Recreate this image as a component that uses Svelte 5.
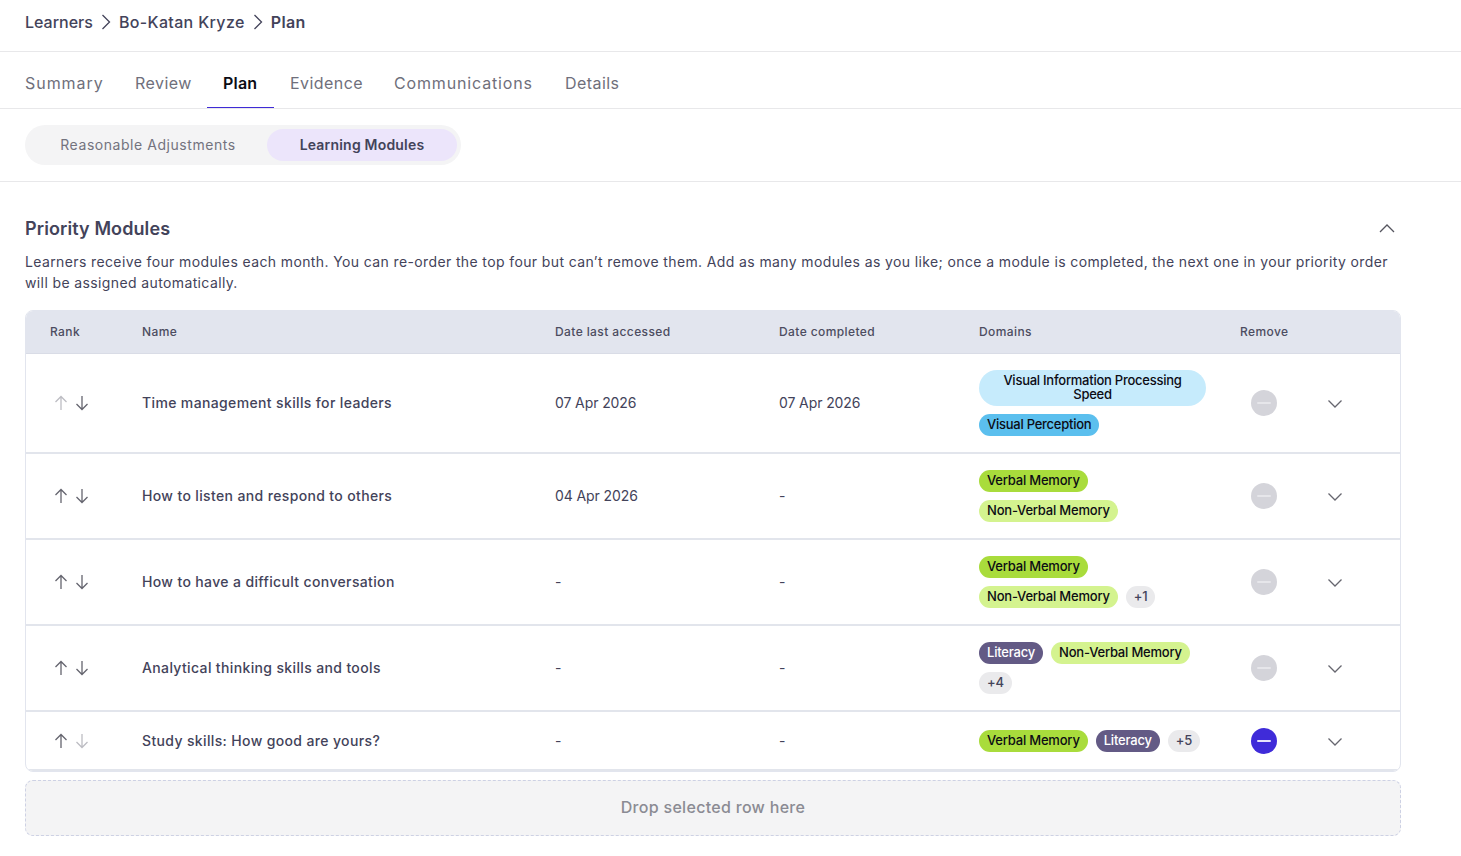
<script>
	const C = {
		verbal: 'Verbal Memory',
		nonverbal: 'Non-Verbal Memory'
	};

	const rows = [
		{
			name: 'Time management skills for leaders',
			accessed: '07 Apr 2026',
			completed: '07 Apr 2026',
			tags: [
				{ label: 'Visual Information Processing Speed', kind: 'sky' },
				{ label: 'Visual Perception', kind: 'blue' }
			],
			upOff: true
		},
		{
			name: 'How to listen and respond to others',
			accessed: '04 Apr 2026',
			completed: '-',
			tags: [
				{ label: C.verbal, kind: 'green' },
				{ label: C.nonverbal, kind: 'lime' }
			]
		},
		{
			name: 'How to have a difficult conversation',
			accessed: '-',
			completed: '-',
			tags: [
				{ label: C.verbal, kind: 'green' },
				{ label: C.nonverbal, kind: 'lime' },
				{ label: '+1', kind: 'more' }
			]
		},
		{
			name: 'Analytical thinking skills and tools',
			accessed: '-',
			completed: '-',
			tags: [
				{ label: 'Literacy', kind: 'purple' },
				{ label: C.nonverbal, kind: 'lime' },
				{ label: '+4', kind: 'more' }
			]
		},
		{
			name: 'Study skills: How good are yours?',
			accessed: '-',
			completed: '-',
			tags: [
				{ label: C.verbal, kind: 'green' },
				{ label: 'Literacy', kind: 'purple' },
				{ label: '+5', kind: 'more' }
			],
			downOff: true,
			removable: true
		}
	];

	const tabs = ['Summary', 'Review', 'Plan', 'Evidence', 'Communications', 'Details'];
</script>

<header class="crumbs">
	<span class="first">Learners</span>
	<svg width="16" height="16" viewBox="0 0 16 16"><path d="M4.500 1l7 7-7 7" /></svg>
	<span>Bo-Katan Kryze</span>
	<svg width="16" height="16" viewBox="0 0 16 16"><path d="M4.500 1l7 7-7 7" /></svg>
	<strong>Plan</strong>
</header>

<nav class="tabs">
	{#each tabs as tab}
		<button class="tab" class:active={tab === 'Plan'}>{tab}</button>
	{/each}
</nav>

<div class="toggle-bar">
	<div class="toggle">
		<button class="seg">Reasonable Adjustments</button>
		<button class="seg on">Learning Modules</button>
	</div>
</div>

<main>
	<div class="title-row">
		<h2>Priority Modules</h2>
		<svg class="collapse" width="18" height="18" viewBox="0 0 18 18"><path d="M2 13l7-7 7 7" /></svg>
	</div>
	<p class="intro">
		Learners receive four modules each month. You can re-order the top four but can’t remove them. Add as many modules as you like; once a module is completed, the next one in your priority order will be assigned automatically.
	</p>

	<div class="table">
		<div class="row head">
			<div>Rank</div>
			<div>Name</div>
			<div>Date last accessed</div>
			<div>Date completed</div>
			<div>Domains</div>
			<div>Remove</div>
		</div>
		{#each rows as row}
			<div class="row">
				<div class="arrows">
					<svg class:off={row.upOff} width="14" height="16" viewBox="0 0 14 16"><path d="M7 15V1.500M1.500 7L7 1.500 12.500 7" /></svg>
					<svg class:off={row.downOff} width="14" height="16" viewBox="0 0 14 16"><path d="M7 1v13.500M1.500 9L7 14.500 12.500 9" /></svg>
				</div>
				<div class="name">{row.name}</div>
				<div class="date">{row.accessed}</div>
				<div class="date">{row.completed}</div>
				<div class="tags">
					{#each row.tags as tag}
						<span class="tag {tag.kind}">{tag.label}</span>
					{/each}
				</div>
				<div class="actions">
					<button class="remove" class:live={row.removable} aria-label="Remove"><i></i></button>
					<svg class="chev" width="16" height="16" viewBox="0 0 16 16"><path d="M1.500 4.500L8 11l6.500-6.500" /></svg>
				</div>
			</div>
		{/each}
	</div>

	<div class="drop">Drop selected row here</div>
</main>

<style>
	:global(body) {
		margin: 0;
		font-family: Inter, 'Noto Sans', sans-serif;
		color: #43435a;
		background: #fff;
	}

	svg path {
		fill: none;
		stroke: currentColor;
		stroke-width: 1.3;
	}

	button {
		font-family: inherit;
		border: none;
		background: none;
		padding: 0;
	}

	.crumbs {
		height: 52px;
		padding: 0 25px 8px;
		box-sizing: border-box;
		border-bottom: 1px solid #e8e8ea;
		display: flex;
		align-items: center;
		gap: 5px;
		font-size: 16px;
		font-weight: 500;
		letter-spacing: 0.35px;
	}

	.crumbs .first {
		letter-spacing: 0;
	}

	.crumbs strong {
		font-weight: 600;
		letter-spacing: 0.4px;
	}

	.tabs {
		height: 57px;
		box-sizing: border-box;
		border-bottom: 1px solid #e8e8ea;
		display: grid;
		grid-template-columns: 110px 88px 67px 104px 171px 86px;
		padding-left: 9px;
	}

	.tab {
		padding: 5px 0 0 16px;
		height: 56px;
		box-sizing: border-box;
		text-align: left;
		font-size: 16px;
		letter-spacing: 0.45px;
		color: #6f6f7b;
	}

	.tab:first-child {
		letter-spacing: 0.95px;
	}

	.tab:nth-child(5) {
		letter-spacing: 0.85px;
	}

	.tab.active {
		padding-top: 7px;
		color: #0c0c14;
		font-weight: 600;
		letter-spacing: 0.2px;
		border-bottom: 1px solid #3f2bd6;
	}

	.toggle-bar {
		height: 73px;
		box-sizing: border-box;
		border-bottom: 1px solid #e8e8ea;
		padding: 16px 25px 0;
	}

	.toggle {
		width: 436px;
		height: 40px;
		box-sizing: border-box;
		border-radius: 20px;
		background: #f4f4f5;
		padding: 4px;
		display: flex;
		font-size: 14px;
	}

	.seg {
		font-size: 14px;
		color: #73737e;
		width: 238px;
		letter-spacing: 0.55px;
		padding-bottom: 2px;
	}

	.seg.on {
		width: 155px;
		flex: 1;
		background: #ece5fb;
		border-radius: 16px;
		color: #43435a;
		font-weight: 600;
		letter-spacing: 0.2px;
	}

	main {
		padding: 34px 60px 0 25px;
	}

	.title-row {
		display: flex;
		justify-content: space-between;
		align-items: center;
		height: 26px;
	}

	.collapse {
		margin: -2px 5px 0 0;
		color: #55555f;
	}

	h2 {
		margin: -2px 0 0;
		font-size: 18px;
		font-weight: 600;
		letter-spacing: 0.1px;
	}

	.intro {
		margin: 9px 0 17px;
		font-size: 14px;
		line-height: 21px;
		letter-spacing: 0.38px;
	}

	.table {
		border: 1px solid #e2e5ee;
		border-radius: 8px;
		overflow: hidden;
	}

	.row {
		display: grid;
		grid-template-columns: 92px 413px 224px 200px 261px 1fr;
		padding-left: 24px;
		align-items: center;
		border-bottom: 2px solid #e2e5ec;
		min-height: 58px;
		font-size: 14px;
	}

	.row:last-child {
		min-height: 56px;
		padding-top: 1px;
	}

	.row.head {
		background: #e2e5ee;
		height: 42px;
		min-height: 0;
		padding-bottom: 0;
		font-size: 12px;
		font-weight: 500;
		letter-spacing: 0.4px;
		border-bottom: 1px solid #d9dce6;
		color: #4c4c60;
	}

	.row.head div {
		padding-bottom: 2px;
	}

	.arrows {
		display: flex;
		gap: 7px;
		padding-left: 4px;
		color: #65656f;
	}

	.arrows .off {
		color: #bdbdc3;
	}

	.name {
		font-weight: 500;
		letter-spacing: 0.36px;
		padding-bottom: 2px;
	}

	.date {
		letter-spacing: -0.1px;
		padding-bottom: 2px;
	}

	.tags {
		display: flex;
		flex-wrap: wrap;
		gap: 8px;
		padding: 16px 0;
		width: 240px;
	}

	.row:last-child .tags {
		padding: 0;
	}

	.tag {
		border-radius: 11px;
		padding: 3px 8px 5px;
		font-size: 13px;
		line-height: 14px;
		font-weight: 500;
		letter-spacing: -0.2px;
		color: #0c0c14;
		text-align: center;
	}

	.tag.sky {
		background: #c6ebfc;
		width: 211px;
		border-radius: 18px;
		letter-spacing: -0.25px;
	}

	.tag.blue {
		background: #5bbfee;
		letter-spacing: -0.25px;
	}

	.tag.green {
		background: #a9dc3c;
	}

	.tag.lime {
		background: #d4f38f;
	}

	.tag.purple {
		background: #635a85;
		color: #fff;
	}

	.tag.more {
		background: #eaeaec;
		color: #43435a;
	}

	.actions {
		display: flex;
		align-items: center;
		gap: 50px;
		padding-left: 11px;
	}

	.remove {
		width: 26px;
		height: 26px;
		border-radius: 50%;
		background: #d4d4da;
		display: flex;
		align-items: center;
		justify-content: center;
	}

	.remove i {
		width: 14px;
		height: 2px;
		border-radius: 1px;
		background: #e6e6ea;
	}

	.remove.live {
		background: #3f2bd9;
	}

	.remove.live i {
		background: #e6e3fb;
	}

	.chev {
		color: #66666f;
		margin-top: 2px;
	}

	.drop {
		margin-top: 8px;
		height: 56px;
		box-sizing: border-box;
		padding-bottom: 3px;
		border: 1px dashed #cdd1e4;
		border-radius: 8px;
		background: #f4f4f5;
		display: flex;
		align-items: center;
		justify-content: center;
		font-size: 16px;
		font-weight: 500;
		color: #8b8b93;
		letter-spacing: 0.3px;
	}
</style>
